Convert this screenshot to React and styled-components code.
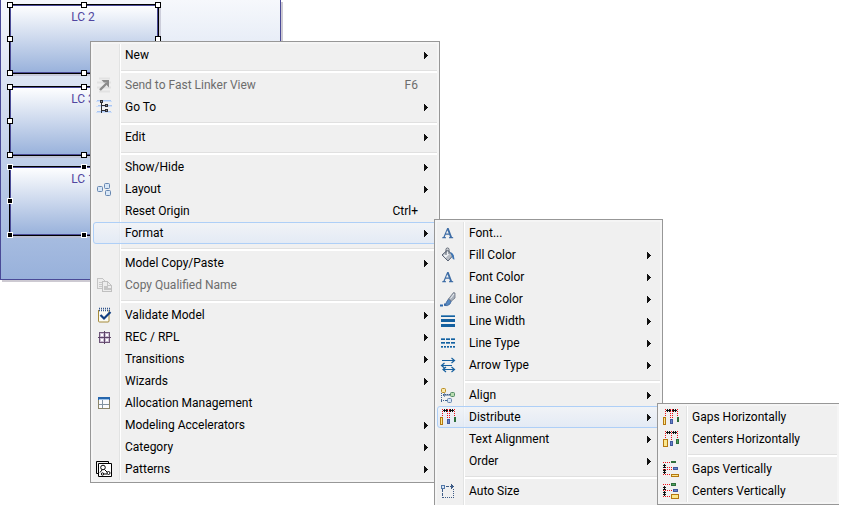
import React from "react";
import styled, { createGlobalStyle, css } from "styled-components";

const GlobalStyle = createGlobalStyle`
  * { box-sizing: border-box; }
  body {
    margin: 0;
    background: #fff;
    font-family: Roboto, "Open Sans", sans-serif;
    font-size: 12px;
  }
`;

const Workspace = styled.main`
  position: relative;
  height: calc(100vh - 4px);
  margin: 0 4px 4px 0;
  overflow: hidden;
`;

/* ---------- diagram ---------- */

const Container = styled.section`
  position: absolute;
  left: 0;
  top: 0;
  width: 281px;
  height: 280px;
  border: 1px solid #4a4a97;
  border-top: 0;
  background: linear-gradient(#f6f8fc, #98b1db);
  box-shadow: 2px 2px 0 #cdcad2;
`;

const Component = styled.div`
  position: absolute;
  left: 8px;
  top: ${(p) => p.$top}px;
  width: 150px;
  height: 70px;
  padding: 4px 2px 0 0;
  border: 1px solid #000;
  background: linear-gradient(#fff, #98b1db);
  box-shadow: inset 0 0 0 1px #4a4a97, 2px 2px 0 rgba(190, 190, 205, 0.7);
  color: #5046a0;
  line-height: 16px;
  text-align: center;
`;

const Handle = styled.span`
  position: absolute;
  left: ${(p) => p.$x};
  top: ${(p) => p.$y};
  width: 6px;
  height: 6px;
  margin: -3px;
  border: 1px solid ${(p) => (p.$primary ? "#fff" : "#000")};
  background: ${(p) => (p.$primary ? "#000" : "#fff")};
`;

const handleSpots = [
  ["0%", "0%"], ["50%", "0%"], ["100%", "0%"],
  ["0%", "50%"], ["100%", "50%"],
  ["0%", "100%"], ["50%", "100%"], ["100%", "100%"],
];

function Node({ name, top, primary }) {
  return (
    <Component $top={top}>
      {name}
      {handleSpots.map(([x, y]) => (
        <Handle key={x + y} $x={x} $y={y} $primary={primary} />
      ))}
    </Component>
  );
}

/* ---------- menu ---------- */

const submenuPlace = css`
  left: calc(100% - 3px);
  top: -3px;
`;

const rootPlace = css`
  left: 90px;
  top: 41px;
`;

const MenuFrame = styled.div`
  position: absolute;
  z-index: 1;
  width: ${(p) => p.$width}px;
  padding: 2px;
  border: 1px solid #979797;
  background: #f5f5f5;
  ${(p) => (p.$sub ? submenuPlace : rootPlace)}
`;

const List = styled.ul`
  margin: 0;
  padding: 0;
  list-style: none;
  min-height: ${(p) => p.$minHeight || 0}px;
  background: linear-gradient(
      to right,
      transparent 26px,
      #e2e3e3 26px,
      #e2e3e3 27px,
      #fff 27px,
      #fff 28px,
      transparent 28px
    )
    #f0f0f0;
`;

const Entry = styled.li`
  position: relative;
`;

const Separator = styled.li`
  height: 8px;
  padding: 4px 0 2px 28px;

  &::before {
    content: "";
    display: block;
    height: 2px;
    border-top: 1px solid #e0e0e0;
    background: #fff;
  }
`;

const Row = styled.button`
  display: flex;
  align-items: center;
  width: 100%;
  height: 22px;
  padding: 0 8px 0 2px;
  border: 1px solid ${(p) => (p.$open ? "#aecff7" : "transparent")};
  border-radius: 3px;
  background: ${(p) =>
    p.$open
      ? "linear-gradient(rgba(241,244,249,.7), rgba(222,232,247,.7))"
      : "transparent"};
  color: ${(p) => (p.disabled ? "#6d6d6d" : "#000")};
  font: inherit;
  line-height: 20px;
  text-align: left;
  white-space: nowrap;
`;

const IconSlot = styled.span`
  display: flex;
  width: 16px;
  height: 16px;
  margin-right: 13px;
`;

const Label = styled.span`
  flex: 1;
`;

const ArrowSlot = styled.span`
  display: flex;
  width: 4px;
  margin-left: 6px;
`;

function Arrow() {
  return (
    <svg width="4" height="7" viewBox="0 0 4 7" shapeRendering="crispEdges" aria-hidden="true">
      <path d="M0 0h1v1h1v1h1v1h1v1h-1v1h-1v1h-1v1h-1z" fill="#111" />
    </svg>
  );
}

function Menu({ label, items, width, sub, minHeight }) {
  return (
    <MenuFrame $width={width} $sub={sub}>
      <List role="menu" aria-label={label} $minHeight={minHeight}>
        {items.map((item, i) =>
          item === "-" ? (
            <Separator key={i} role="separator" />
          ) : (
            <Entry key={i} role="none">
              <Row
                role="menuitem"
                type="button"
                disabled={item.disabled}
                $open={!!item.menu}
                aria-haspopup={item.more ? "menu" : undefined}
                aria-expanded={item.menu ? true : undefined}
              >
                <IconSlot>{item.icon}</IconSlot>
                <Label>{item.label}</Label>
                {item.keys && <span>{item.keys}</span>}
                <ArrowSlot>{item.more && <Arrow />}</ArrowSlot>
              </Row>
              {item.menu && <Menu sub label={item.label} {...item.menu} />}
            </Entry>
          )
        )}
      </List>
    </MenuFrame>
  );
}

/* ---------- icons ---------- */

function Icon({ crisp, children }) {
  return (
    <svg
      width="16"
      height="16"
      viewBox="0 0 16 16"
      fill="none"
      shapeRendering={crisp ? "crispEdges" : undefined}
      aria-hidden="true"
    >
      {children}
    </svg>
  );
}

const sendIcon = (
  <Icon>
    <path d="M3 1.500h11M1 5.500h14M1 10.500h14M3 14.500h11" stroke="#e2e2e2" strokeWidth="2" />
    <path d="M4 13l7-7" stroke="#8c8c8c" strokeWidth="2.400" />
    <path d="M5.500 3H13v7.500l-2.400-2.400V5.400H7.900z" fill="#8c8c8c" />
  </Icon>
);

const goToIcon = (
  <Icon crisp>
    <path d="M1 1h14v2H1zM2 6h14v2H2zM1 12h14v2H1z" fill="#a9c6f3" />
    <path d="M0 2h16v1H0zM0 7h16v1H0zM0 13h16v1H0z" fill="#cfdff8" />
    <path d="M4 1h3v3H4zM9 5h3v3H9zM9 10h3v3H9z" fill="#2d2d33" />
    <path d="M5 2h1v1H5zM10 6h1v1h-1zM10 11h1v1h-1z" fill="#8a8f9c" />
    <path d="M5 4h1v10H5zM5 6h4v1H5zM5 11h4v1H5z" fill="#2d2d33" />
  </Icon>
);

const layoutIcon = (
  <Icon>
    <g stroke="#6787b0" fill="#d8e7f7">
      <rect x="1.500" y="5.500" width="5" height="5" rx="1" />
      <rect x="8.500" y="2.500" width="5" height="5" rx="1" />
      <rect x="9.500" y="9.500" width="5" height="5" rx="1" />
    </g>
  </Icon>
);

const copyIcon = (
  <Icon crisp>
    <path d="M1.500 1.500h5l3 3v7h-8z" fill="#ededed" stroke="#c5c5c5" />
    <path d="M3 5h4v1H3zM3 7h4v1H3zM3 9h4v1H3z" fill="#c9c9c9" />
    <path d="M6.500 4.500h5l4 4v6h-9z" fill="#ededed" stroke="#c0c0c0" />
    <path d="M11.500 4.500v4h4M8 9h3v1H8zM8 11h6v1H8z" stroke="#c5c5c5" />
  </Icon>
);

const validateIcon = (
  <Icon>
    <path d="M2.500 3v11q0 1 1 1h8.500q1 0 1-1V3" stroke="#a58a3a" fill="#fbfbf4" />
    <path d="M3 1.500h11M3 3.500h11" stroke="#33568c" strokeWidth="1.500" strokeDasharray="1 1" />
    <path d="M4.500 8l3.500 3.500L14.500 5" stroke="#123f80" strokeWidth="2.200" />
  </Icon>
);

const recIcon = (
  <Icon crisp>
    <path d="M3.500 3.500h10v10h-10z" fill="#cbbcd3" stroke="#6e5578" />
    <path d="M8 2h1v13H8zM2 8h13v1H2z" fill="#5c4467" />
    <path d="M5 5h2v2H5zM10 5h2v2h-2zM5 10h2v2H5zM10 10h2v2h-2z" fill="#fff" />
  </Icon>
);

const allocationIcon = (
  <Icon crisp>
    <path d="M2.500 3.500h11v10h-11z" fill="#fbfbfb" stroke="#8b8569" />
    <path d="M2 2h12v3H2z" fill="#2666ad" />
    <path d="M3 4h10v1H3z" fill="#9cc3ec" />
    <path d="M6 5h1v8H6zM3 9h10v1H3z" fill="#8292a0" />
  </Icon>
);

const patternsIcon = (
  <Icon>
    <path d="M12.500 2.500v-2H.5v12h2" stroke="#000" />
    <path d="M2.500 2.500h13v13h-13z" fill="#fff" stroke="#000" />
    <circle cx="7" cy="6.500" r="2.300" stroke="#000" />
    <circle cx="12.500" cy="12" r="1.500" stroke="#000" />
    <circle cx="6.500" cy="13" r="1.200" stroke="#000" />
    <path d="M8.500 8.500l2.500 2.500M6 9l-2 2.500M8 13h3" stroke="#000" />
  </Icon>
);

const fontIcon = (
  <Icon>
    <path
      d="M7.200 3h1.400l3.400 9 1.200.3v.9H9v-.9l1-.3-.8-2.300H5.600L4.800 12l1.200.3v.9H2.200v-.9l1.200-.3zM7.300 5.200L6 8.600h2.800z"
      fill="#3d6ca5"
      fillRule="evenodd"
    />
  </Icon>
);

const fillIcon = (
  <Icon>
    <path d="M2 8l5.500-5L13 8.500 8 14z" fill="#b7bcc4" stroke="#596273" />
    <path d="M3.500 8.500L8 4.500l2 2-4.500 4.500z" fill="#eef0f3" />
    <path d="M6 8V2.500q0-1.500 1.500-1.500T9 2.500V7" stroke="#555e6c" />
    <path d="M10 5q4 .5 4.500 7.500-2 .5-2.500-3z" fill="#3c74b4" />
  </Icon>
);

const brushIcon = (
  <Icon>
    <path d="M0 14.500h3M4 13.500h2" stroke="#2c69ad" strokeWidth="2" />
    <path d="M4.500 14.500q3 1 5.500-1.500l1.500-3.500-3-1.500-2 3q-.5 2.500-2 3.500z" fill="#5588c0" stroke="#3b6298" strokeWidth=".8" />
    <path d="M8.500 8l5-6.500 1.500.5v5l-3.500 3z" fill="#a9b1bd" stroke="#6c7584" strokeWidth=".8" />
    <path d="M10.500 7.500L14 3" stroke="#eef1f5" />
  </Icon>
);

const widthIcon = (
  <Icon crisp>
    <path d="M1 3h14v1H1zM1 6h14v3H1zM1 11h14v3H1z" fill="#14609f" />
    <path d="M1 2h14v1H1z" fill="#5b93c0" />
  </Icon>
);

const typeIcon = (
  <Icon crisp>
    <path d="M1 3h4v2H1zM6 3h4v2H6zM11 3h4v2h-4zM1 7h4v2H1zM6 7h4v2H6zM11 7h4v2h-4zM1 11h2v2H1zM4 11h2v2H4zM7 11h2v2H7zM10 11h2v2h-2zM13 11h2v2h-2z" fill="#5b93c0" />
    <path d="M1 4h4v1H1zM6 4h4v1H6zM11 4h4v1h-4zM1 7h4v1H1zM6 7h4v1H6zM11 7h4v1h-4zM1 11h2v1H1zM4 11h2v1H4zM7 11h2v1H7zM10 11h2v1h-2zM13 11h2v1h-2z" fill="#14609f" />
  </Icon>
);

const arrowTypeIcon = (
  <Icon>
    <g stroke="#17609f" strokeWidth="1.200">
      <path d="M2 3.500h12M11.500 1l3 2.500-3 2.500" />
      <path d="M1 8.500h11M4.500 6L1.500 8.500l3 2.500" />
      <path d="M3 12.500h11M6 10l-3 2.500L6 15M11.500 10l3 2.500-3 2.500" />
    </g>
  </Icon>
);

const alignIcon = (
  <Icon>
    <path d="M1.500 6v10M1 13.500h5M3 7.500h7" stroke="#3e618f" strokeDasharray="1 1" />
    <path d="M4 8h6M5 13.500h3M5 6.500L3 8l2 1.500" stroke="#3e618f" />
    <rect x="1.500" y="1.500" width="4" height="4" rx="1" fill="#f8e9ad" stroke="#b98b22" />
    <rect x="10.500" y="5.500" width="4" height="4" rx="1" fill="#b8dcb0" stroke="#548b65" />
    <rect x="7.500" y="11.500" width="4" height="4" rx="1" fill="#d7e6f6" stroke="#6484ad" />
  </Icon>
);

const autoSizeIcon = (
  <Icon crisp>
    <path d="M2.500 6v9M3 14.500h11M13.500 6v9M6 3.500h6" stroke="#3e5c86" strokeDasharray="1 1" />
    <path d="M2.500 7v6M7 3.500h6" stroke="#3e5c86" strokeDasharray="2 1" />
    <path d="M11 1h1v1h1v1h1v1h-1v1h-1v1h-1z" fill="#3e5c86" />
    <rect x="1.500" y="2.500" width="3" height="3" fill="#d7e6f6" stroke="#5478a7" />
  </Icon>
);

const box = {
  orange: { fill: "#fbe88d", stroke: "#b57810" },
  blue: { fill: "#6483ce", stroke: "#41589c" },
  green: { fill: "#4ca15c", stroke: "#2e6e3c" },
};

function Block({ tone, x, y, w, h }) {
  return <rect x={x + 0.5} y={y + 0.5} width={w - 1} height={h - 1} {...box[tone]} />;
}

function DistributeIcon({ vertical, lines, blocks }) {
  return (
    <Icon crisp>
      {lines.map((n) => (
        <path
          key={n}
          d={[0, 2, 4, 6, 8]
            .map((k) => (vertical ? `M${k} ${n}h1v1h-1z` : `M${n} ${k}h1v1h-1z`))
            .join("")}
          fill="#f01018"
        />
      ))}
      <path
        d={
          vertical
            ? "M1 3h1v4H1zM0 4h3v1H0zM0 6h3v1H0zM1 8h1v5H1zM0 9h3v1H0zM0 11h3v1H0z"
            : "M3 1h5v1H3zM4 0h1v3H4zM6 0h1v3H6zM9 1h5v1H9zM10 0h1v3h-1zM12 0h1v3h-1z"
        }
        fill="#111"
      />
      {blocks.map(([tone, x, y, w, h]) => (
        <Block key={tone} tone={tone} x={x} y={y} w={w} h={h} />
      ))}
    </Icon>
  );
}

const gapsHIcon = (
  <DistributeIcon
    lines={[2, 7, 9, 14]}
    blocks={[["orange", 0, 8, 3, 8], ["blue", 7, 10, 3, 5], ["green", 14, 8, 2, 5]]}
  />
);
const centersHIcon = (
  <DistributeIcon
    lines={[2, 8, 14]}
    blocks={[["orange", 0, 8, 5, 8], ["blue", 7, 10, 3, 5], ["green", 13, 8, 3, 5]]}
  />
);
const gapsVIcon = (
  <DistributeIcon
    vertical
    lines={[1, 6, 8, 13]}
    blocks={[["green", 8, 0, 5, 2], ["blue", 10, 6, 5, 3], ["orange", 8, 13, 8, 3]]}
  />
);
const centersVIcon = (
  <DistributeIcon
    vertical
    lines={[1, 7, 13]}
    blocks={[["green", 8, 0, 5, 3], ["blue", 10, 6, 5, 3], ["orange", 8, 11, 8, 5]]}
  />
);

/* ---------- content ---------- */

const distributeItems = [
  { label: "Gaps Horizontally", icon: gapsHIcon },
  { label: "Centers Horizontally", icon: centersHIcon },
  "-",
  { label: "Gaps Vertically", icon: gapsVIcon },
  { label: "Centers Vertically", icon: centersVIcon },
];

const formatItems = [
  { label: "Font...", icon: fontIcon },
  { label: "Fill Color", icon: fillIcon, more: true },
  { label: "Font Color", icon: fontIcon, more: true },
  { label: "Line Color", icon: brushIcon, more: true },
  { label: "Line Width", icon: widthIcon, more: true },
  { label: "Line Type", icon: typeIcon, more: true },
  { label: "Arrow Type", icon: arrowTypeIcon, more: true },
  "-",
  { label: "Align", icon: alignIcon, more: true },
  {
    label: "Distribute",
    icon: gapsHIcon,
    more: true,
    menu: { items: distributeItems, width: 183 },
  },
  { label: "Text Alignment", more: true },
  { label: "Order", more: true },
  "-",
  { label: "Auto Size", icon: autoSizeIcon },
];

const contextItems = [
  { label: "New", more: true },
  "-",
  { label: "Send to Fast Linker View", icon: sendIcon, keys: "F6", disabled: true },
  { label: "Go To", icon: goToIcon, more: true },
  "-",
  { label: "Edit", more: true },
  "-",
  { label: "Show/Hide", more: true },
  { label: "Layout", icon: layoutIcon, more: true },
  { label: "Reset Origin", keys: "Ctrl+" },
  {
    label: "Format",
    more: true,
    menu: { items: formatItems, width: 229, minHeight: 300 },
  },
  "-",
  { label: "Model Copy/Paste", more: true },
  { label: "Copy Qualified Name", icon: copyIcon, disabled: true },
  "-",
  { label: "Validate Model", icon: validateIcon, more: true },
  { label: "REC / RPL", icon: recIcon, more: true },
  { label: "Transitions", more: true },
  { label: "Wizards", more: true },
  { label: "Allocation Management", icon: allocationIcon },
  { label: "Modeling Accelerators", more: true },
  { label: "Category", more: true },
  { label: "Patterns", icon: patternsIcon, more: true },
];

export default function App() {
  return (
    <>
      <GlobalStyle />
      <Workspace>
        <Container aria-label="Diagram">
          <Node name="LC 2" top={4} />
          <Node name="LC 3" top={86} />
          <Node name="LC 1" top={166} primary />
        </Container>
        <Menu label="Diagram actions" items={contextItems} width={350} />
      </Workspace>
    </>
  );
}
